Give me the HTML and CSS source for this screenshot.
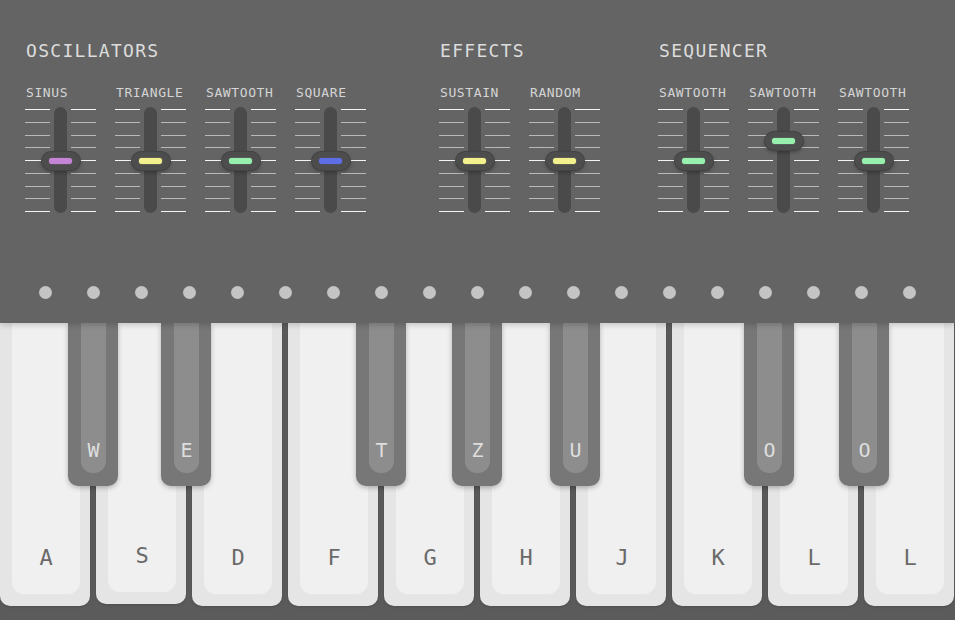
FILE: index.html
```html
<!DOCTYPE html>
<html>
<head>
<meta charset="utf-8">
<link rel="stylesheet" href="styles.css">
</head>
<body>
<div class="synth">
  <div class="panel">
    <div class="sections">
      <section class="sec sec-osc">
        <h2 class="sec-title">OSCILLATORS</h2>
        <div class="sliders">
          <div class="slider">
            <div class="slider-label">SINUS</div>
            <div class="fader">
              <div class="ticks"><i class="hi"></i><i></i><i></i><i></i><i class="hi"></i><i></i><i></i><i></i><i class="hi"></i></div>
              <div class="track"><div class="knob k-mid"><span class="pill purple"></span></div></div>
              <div class="ticks"><i class="hi"></i><i></i><i></i><i></i><i class="hi"></i><i></i><i></i><i></i><i class="hi"></i></div>
            </div>
          </div>
          <div class="slider">
            <div class="slider-label">TRIANGLE</div>
            <div class="fader">
              <div class="ticks"><i class="hi"></i><i></i><i></i><i></i><i class="hi"></i><i></i><i></i><i></i><i class="hi"></i></div>
              <div class="track"><div class="knob k-mid"><span class="pill yellow"></span></div></div>
              <div class="ticks"><i class="hi"></i><i></i><i></i><i></i><i class="hi"></i><i></i><i></i><i></i><i class="hi"></i></div>
            </div>
          </div>
          <div class="slider">
            <div class="slider-label">SAWTOOTH</div>
            <div class="fader">
              <div class="ticks"><i class="hi"></i><i></i><i></i><i></i><i class="hi"></i><i></i><i></i><i></i><i class="hi"></i></div>
              <div class="track"><div class="knob k-mid"><span class="pill green"></span></div></div>
              <div class="ticks"><i class="hi"></i><i></i><i></i><i></i><i class="hi"></i><i></i><i></i><i></i><i class="hi"></i></div>
            </div>
          </div>
          <div class="slider">
            <div class="slider-label">SQUARE</div>
            <div class="fader">
              <div class="ticks"><i class="hi"></i><i></i><i></i><i></i><i class="hi"></i><i></i><i></i><i></i><i class="hi"></i></div>
              <div class="track"><div class="knob k-mid"><span class="pill blue"></span></div></div>
              <div class="ticks"><i class="hi"></i><i></i><i></i><i></i><i class="hi"></i><i></i><i></i><i></i><i class="hi"></i></div>
            </div>
          </div>
        </div>
      </section>
      <section class="sec sec-fx">
        <h2 class="sec-title">EFFECTS</h2>
        <div class="sliders">
          <div class="slider">
            <div class="slider-label">SUSTAIN</div>
            <div class="fader">
              <div class="ticks"><i class="hi"></i><i></i><i></i><i></i><i class="hi"></i><i></i><i></i><i></i><i class="hi"></i></div>
              <div class="track"><div class="knob k-mid"><span class="pill yellow"></span></div></div>
              <div class="ticks"><i class="hi"></i><i></i><i></i><i></i><i class="hi"></i><i></i><i></i><i></i><i class="hi"></i></div>
            </div>
          </div>
          <div class="slider">
            <div class="slider-label">RANDOM</div>
            <div class="fader">
              <div class="ticks"><i class="hi"></i><i></i><i></i><i></i><i class="hi"></i><i></i><i></i><i></i><i class="hi"></i></div>
              <div class="track"><div class="knob k-mid"><span class="pill yellow"></span></div></div>
              <div class="ticks"><i class="hi"></i><i></i><i></i><i></i><i class="hi"></i><i></i><i></i><i></i><i class="hi"></i></div>
            </div>
          </div>
        </div>
      </section>
      <section class="sec sec-seq">
        <h2 class="sec-title">SEQUENCER</h2>
        <div class="sliders">
          <div class="slider">
            <div class="slider-label">SAWTOOTH</div>
            <div class="fader">
              <div class="ticks"><i class="hi"></i><i></i><i></i><i></i><i class="hi"></i><i></i><i></i><i></i><i class="hi"></i></div>
              <div class="track"><div class="knob k-mid"><span class="pill green"></span></div></div>
              <div class="ticks"><i class="hi"></i><i></i><i></i><i></i><i class="hi"></i><i></i><i></i><i></i><i class="hi"></i></div>
            </div>
          </div>
          <div class="slider">
            <div class="slider-label">SAWTOOTH</div>
            <div class="fader">
              <div class="ticks"><i class="hi"></i><i></i><i></i><i></i><i class="hi"></i><i></i><i></i><i></i><i class="hi"></i></div>
              <div class="track"><div class="knob k-high"><span class="pill green"></span></div></div>
              <div class="ticks"><i class="hi"></i><i></i><i></i><i></i><i class="hi"></i><i></i><i></i><i></i><i class="hi"></i></div>
            </div>
          </div>
          <div class="slider">
            <div class="slider-label">SAWTOOTH</div>
            <div class="fader">
              <div class="ticks"><i class="hi"></i><i></i><i></i><i></i><i class="hi"></i><i></i><i></i><i></i><i class="hi"></i></div>
              <div class="track"><div class="knob k-mid"><span class="pill green"></span></div></div>
              <div class="ticks"><i class="hi"></i><i></i><i></i><i></i><i class="hi"></i><i></i><i></i><i></i><i class="hi"></i></div>
            </div>
          </div>
        </div>
      </section>
    </div>
    <div class="dots">
      <span></span><span></span><span></span><span></span><span></span><span></span><span></span><span></span><span></span><span></span><span></span><span></span><span></span><span></span><span></span><span></span><span></span><span></span><span></span>
    </div>
  </div>
  <div class="keyboard">
    <div class="wkey"><div class="wface">A</div></div>
    <div class="wkey wkey-down"><div class="wface">S</div></div>
    <div class="wkey"><div class="wface">D</div></div>
    <div class="wkey"><div class="wface">F</div></div>
    <div class="wkey"><div class="wface">G</div></div>
    <div class="wkey"><div class="wface">H</div></div>
    <div class="wkey"><div class="wface">J</div></div>
    <div class="wkey"><div class="wface">K</div></div>
    <div class="wkey"><div class="wface">L</div></div>
    <div class="wkey"><div class="wface">L</div></div>
    <div class="bkey b1"><div class="bface">W</div></div>
    <div class="bkey b2"><div class="bface">E</div></div>
    <div class="bkey b3"><div class="bface">T</div></div>
    <div class="bkey b4"><div class="bface">Z</div></div>
    <div class="bkey b5"><div class="bface">U</div></div>
    <div class="bkey b6"><div class="bface">O</div></div>
    <div class="bkey b7"><div class="bface">O</div></div>
  </div>
</div>
</body>
</html>
```
FILE: styles.css
```css
html, body {
  margin: 0;
  padding: 0;
}
body {
  background: #5b5b5b;
  width: 955px;
  height: 620px;
  overflow: hidden;
  font-family: "DejaVu Sans Mono", "Liberation Mono", monospace;
}
.synth {
  position: relative;
  width: 955px;
  height: 620px;
}
.panel {
  position: relative;
  z-index: 3;
  height: 323px;
  box-sizing: border-box;
  background: #646464;
  padding-top: 42px;
  box-shadow: 0 2px 6px rgba(0, 0, 0, 0.18);
}
.sections {
  display: flex;
}
.sec-osc { margin-left: 25px; }
.sec-fx { margin-left: 73px; }
.sec-seq { margin-left: 58px; }
.sec-title {
  margin: 0 0 0 1px;
  font-size: 18px;
  line-height: 18px;
  font-weight: normal;
  letter-spacing: 1.3px;
  color: #dcdcdc;
}
.sliders {
  display: flex;
  gap: 19px;
  margin-top: 25.5px;
}
.slider {
  width: 71px;
}
.slider-label {
  margin-left: 1px;
  font-size: 13px;
  line-height: 13px;
  letter-spacing: 0.6px;
  color: #d4d4d4;
}
.fader {
  display: grid;
  grid-template-columns: 25px 1fr 25px;
  height: 106px;
  margin-top: 8.5px;
}
.ticks {
  display: flex;
  flex-direction: column;
  justify-content: space-between;
  padding: 2px 0 1px;
}
.ticks i {
  display: block;
  height: 1px;
  background: #b9b9b9;
}
.ticks i.hi {
  background: #f4f4f4;
}
.track {
  position: relative;
  justify-self: center;
  width: 13px;
  height: 106px;
  border-radius: 7px;
  background: #4a4a4a;
}
.knob {
  position: absolute;
  left: 50%;
  width: 38px;
  height: 18px;
  margin-left: -19px;
  box-sizing: border-box;
  border-radius: 9px;
  background: #4d4d4d;
  box-shadow: 0 0 0 1px #434343, 0 2px 4px rgba(0, 0, 0, 0.35);
  display: flex;
  align-items: center;
  justify-content: center;
}
.k-mid { top: 45px; }
.k-high { top: 25px; }
.pill {
  display: block;
  width: 23px;
  height: 6px;
  border-radius: 3px;
}
.purple { background: #c584d6; box-shadow: 0 0 1px #c584d6; }
.yellow { background: #f3f08e; box-shadow: 0 0 1px #f3f08e; }
.green { background: #98f0ae; box-shadow: 0 0 1px #98f0ae; }
.blue { background: #5d6ee6; box-shadow: 0 0 1px #5d6ee6; }
.dots {
  display: flex;
  gap: 35px;
  padding-left: 38.5px;
  margin-top: 72.5px;
}
.dots span {
  width: 13px;
  height: 13px;
  border-radius: 50%;
  background: #c4c4c4;
}
.keyboard {
  position: relative;
  display: flex;
  gap: 6px;
  height: 297px;
}
.wkey {
  flex: 0 0 90px;
  height: 283px;
  box-sizing: border-box;
  padding: 0 10px 12px 12px;
  background: #e5e5e5;
  border-radius: 0 0 10px 10px;
  box-shadow: 0 1px 3px rgba(0, 0, 0, 0.15);
}
.wkey-down {
  height: 281px;
}
.wface {
  height: 100%;
  box-sizing: border-box;
  background: #f0f0f0;
  border-radius: 0 0 12px 12px;
  display: flex;
  align-items: flex-end;
  justify-content: center;
  padding-bottom: 25px;
  font-size: 22px;
  line-height: 22px;
  color: #6a6a6a;
}
.bkey {
  position: absolute;
  top: 0;
  z-index: 2;
  width: 50px;
  height: 163px;
  box-sizing: border-box;
  padding: 0 12px 13px 13px;
  background: #777777;
  border-radius: 0 0 10px 10px;
  box-shadow: 0 2px 5px rgba(0, 0, 0, 0.25);
}
.bface {
  height: 100%;
  box-sizing: border-box;
  background: #8d8d8d;
  border-radius: 0 0 12px 12px;
  display: flex;
  align-items: flex-end;
  justify-content: center;
  padding-bottom: 13px;
  font-size: 20px;
  line-height: 20px;
  color: #dedede;
}
.b1 { left: 68px; }
.b2 { left: 161px; }
.b3 { left: 356px; }
.b4 { left: 452px; }
.b5 { left: 550px; }
.b6 { left: 744px; }
.b7 { left: 839px; }
```
